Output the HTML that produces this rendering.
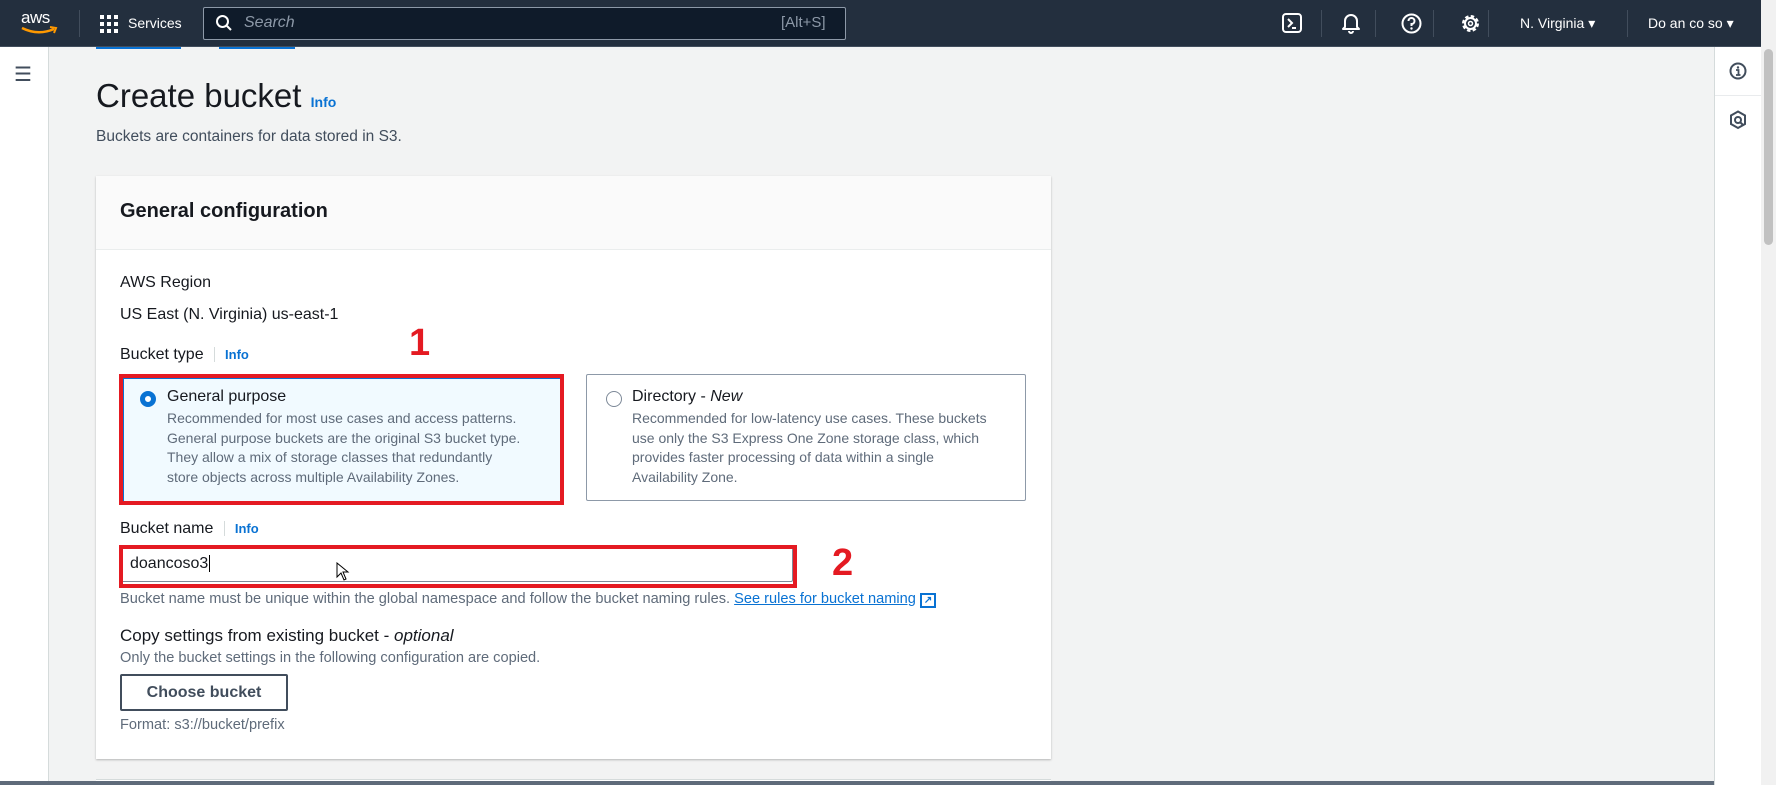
<!DOCTYPE html>
<html><head><meta charset="utf-8"><style>
*{box-sizing:border-box;margin:0;padding:0}
body{width:1776px;height:785px;overflow:hidden;background:#f2f3f3;font-family:"Liberation Sans",sans-serif;color:#16191f;position:relative}
.abs{position:absolute}
.nav{left:0;top:0;width:1761px;height:47px;background:#232f3e;border-bottom:1px solid #414d5c}
.nav .t{color:#fff;font-size:14px;position:absolute;top:15px}
.sep{position:absolute;top:10px;width:1px;height:27px;background:#414d5c}
.side{left:0;top:47px;width:49px;height:738px;background:#fff;border-right:1px solid #d5dbdb}
.rp{left:1714px;top:47px;width:47px;height:738px;background:#fff;border-left:1px solid #d5dbdb}
.sb{left:1761px;top:0;width:15px;height:785px;background:#f1f1f1}
.card{left:96px;top:176px;width:955px;height:583px;background:#fff;box-shadow:0 1px 2px rgba(0,0,0,.25)}
.hd{left:0;top:0;width:955px;height:74px;background:#fafafa;border-bottom:1px solid #eaeded}
.lbl{font-size:16px;position:absolute}
.info{color:#0972d3;font-weight:bold;font-size:13px}
.desc{font-size:14px;color:#5f6b7a;line-height:19.5px;position:absolute;white-space:nowrap}
.red{position:absolute;border:4px solid #e41a22}
.num{position:absolute;color:#e41a22;font-weight:bold;font-size:38px}
</style></head><body>
<div class="abs nav">
 <div class="abs" style="left:21px;top:8px;color:#fff;font-size:17px;letter-spacing:-.5px">aws</div>
 <svg class="abs" style="left:20px;top:26px" width="40" height="10"><path d="M2 2 Q18 10 34 3" stroke="#ff9900" stroke-width="2.5" fill="none"/><path d="M30 1 L36 2 L34 7" stroke="#ff9900" stroke-width="2" fill="none"/></svg>
 <div class="sep" style="left:79px"></div>
 <svg class="abs" style="left:100px;top:15px" width="18" height="18" fill="#fff"><rect x="0" y="0" width="4" height="4"/><rect x="7" y="0" width="4" height="4"/><rect x="14" y="0" width="4" height="4"/><rect x="0" y="7" width="4" height="4"/><rect x="7" y="7" width="4" height="4"/><rect x="14" y="7" width="4" height="4"/><rect x="0" y="14" width="4" height="4"/><rect x="7" y="14" width="4" height="4"/><rect x="14" y="14" width="4" height="4"/></svg>
 <div class="t" style="left:128px">Services</div>
 <div class="abs" style="left:203px;top:7px;width:643px;height:33px;background:#0f1b2a;border:1px solid #8d99a8;border-radius:2px"></div>
 <svg class="abs" style="left:215px;top:14px" width="18" height="18"><circle cx="7.5" cy="7.5" r="5.5" stroke="#fff" stroke-width="2" fill="none"/><path d="M12 12 L16 16" stroke="#fff" stroke-width="2"/></svg>
 <div class="t" style="left:244px;font-style:italic;color:#8d99a8;font-size:16px;top:14px">Search</div>
 <div class="t" style="left:781px;color:#8d99a8;font-size:15px;top:14px">[Alt+S]</div>
 <svg class="abs" style="left:1282px;top:13px" width="20" height="20"><rect x="1" y="1" width="18" height="18" rx="3" stroke="#fff" stroke-width="2" fill="none"/><path d="M6 6 L10 10 L6 14 M10 15 H14" stroke="#fff" stroke-width="2" fill="none"/></svg>
 <div class="sep" style="left:1321px"></div>
 <svg class="abs" style="left:1341px;top:12px" width="20" height="22"><path d="M4 15 V9 A6 6 0 0 1 16 9 V15 L18 17 H2 Z" stroke="#fff" stroke-width="2" fill="none" stroke-linejoin="round"/><path d="M8 19 A2 2 0 0 0 12 19" stroke="#fff" stroke-width="2" fill="none"/></svg>
 <div class="sep" style="left:1375px"></div>
 <svg class="abs" style="left:1401px;top:13px" width="21" height="21"><circle cx="10.5" cy="10.5" r="9" stroke="#fff" stroke-width="2" fill="none"/><path d="M7.5 8 A3 3 0 1 1 10.5 11 V13" stroke="#fff" stroke-width="2" fill="none"/><circle cx="10.5" cy="15.5" r="1.2" fill="#fff"/></svg>
 <div class="sep" style="left:1433px"></div>
 <svg class="abs" style="left:1460px;top:13px" width="21" height="21"><circle cx="10.5" cy="10.5" r="7" stroke="#fff" stroke-width="3" stroke-dasharray="3.3 2.2" fill="none"/><circle cx="10.5" cy="10.5" r="5.5" stroke="#fff" stroke-width="2" fill="none"/><circle cx="10.5" cy="10.5" r="2" stroke="#fff" stroke-width="1.5" fill="none"/></svg>
 <div class="sep" style="left:1488px"></div>
 <div class="t" style="left:1520px">N. Virginia ▾</div>
 <div class="sep" style="left:1627px"></div>
 <div class="t" style="left:1648px">Do an co so ▾</div>
</div>
<div class="abs side"><div class="abs" style="left:14px;top:15px;color:#414d5c;font-size:20px">☰</div></div>
<div class="abs" style="left:96px;top:47px;width:85px;height:2px;background:#0972d3"></div>
<div class="abs" style="left:219px;top:47px;width:76px;height:2px;background:#0972d3"></div>
<div class="abs" style="left:96px;top:77px;font-size:33px;color:#16191f">Create bucket <span class="info" style="font-size:14px">Info</span></div>
<div class="abs" style="left:96px;top:128px;font-size:15.5px;color:#414d5c">Buckets are containers for data stored in S3.</div>
<div class="abs card">
 <div class="abs hd"><div class="abs" style="left:24px;top:24px;font-size:20px;font-weight:bold">General configuration</div></div>
 <div class="lbl" style="left:24px;top:98px">AWS Region</div>
 <div class="lbl" style="left:24px;top:130px">US East (N. Virginia) us-east-1</div>
 <div class="lbl" style="left:24px;top:170px">Bucket type <span style="border-left:1px solid #d5dbdb;margin-left:6px;padding-left:10px" class="info">Info</span></div>
 <div class="abs" style="left:27px;top:202px;width:440px;height:125px;background:#f1faff;border:1px solid #0972d3"></div>
 <div class="abs" style="left:490px;top:198px;width:440px;height:127px;border:1px solid #8d99a8;border-radius:2px"></div>
 <div class="abs" style="left:44px;top:215px;width:16px;height:16px;border-radius:50%;border:5px solid #0972d3;background:#fff"></div>
 <div class="lbl" style="left:71px;top:212px">General purpose</div>
 <div class="desc" style="left:71px;top:233px">Recommended for most use cases and access patterns.<br>General purpose buckets are the original S3 bucket type.<br>They allow a mix of storage classes that redundantly<br>store objects across multiple Availability Zones.</div>
 <div class="abs" style="left:510px;top:215px;width:16px;height:16px;border-radius:50%;border:1.5px solid #7d8998"></div>
 <div class="lbl" style="left:536px;top:212px">Directory - <i>New</i></div>
 <div class="desc" style="left:536px;top:233px">Recommended for low-latency use cases. These buckets<br>use only the S3 Express One Zone storage class, which<br>provides faster processing of data within a single<br>Availability Zone.</div>
 <div class="lbl" style="left:24px;top:344px">Bucket name <span style="border-left:1px solid #d5dbdb;margin-left:6px;padding-left:10px" class="info">Info</span></div>
 <div class="abs" style="left:24px;top:371px;width:673px;height:35px;border:1px solid #7d8998;border-radius:2px"></div>
 <div class="lbl" style="left:34px;top:379px">doancoso3<span style="border-left:1px solid #000;margin-left:1px"></span></div>
 <svg class="abs" style="left:240px;top:386px" width="14" height="20"><path d="M1 1 V15 L5 11 L8 18 L10 17 L7 10 L12 10 Z" fill="#fff" stroke="#000" stroke-width="1"/></svg>
 <div class="desc" style="left:24px;top:414px;font-size:14.6px">Bucket name must be unique within the global namespace and follow the bucket naming rules. <span style="color:#0972d3;text-decoration:underline">See rules for bucket naming</span> <span style="color:#0972d3;font-weight:bold;border:2px solid #0972d3;font-size:10px;padding:0 2px">↗</span></div>
 <div class="lbl" style="left:24px;top:450px;font-size:17px">Copy settings from existing bucket - <i>optional</i></div>
 <div class="desc" style="left:24px;top:473px;font-size:14.6px">Only the bucket settings in the following configuration are copied.</div>
 <div class="abs" style="left:24px;top:498px;width:168px;height:37px;border:2px solid #414d5c;border-radius:2px;font-weight:bold;font-size:16px;text-align:center;line-height:33px;color:#414d5c">Choose bucket</div>
 <div class="desc" style="left:24px;top:540px;font-size:14.6px">Format: s3://bucket/prefix</div>
</div>
<div class="red" style="left:119px;top:374px;width:445px;height:131px"></div>
<div class="red" style="left:119px;top:545px;width:678px;height:43px"></div>
<div class="num" style="left:409px;top:322px">1</div>
<div class="num" style="left:832px;top:542px">2</div>
<div class="abs" style="left:96px;top:779px;width:955px;height:6px;background:#fff;border-top:1px solid #d5dbdb"></div>
<div class="abs" style="left:0;top:781px;width:1761px;height:4px;background:#5f6b7a"></div>
<div class="abs rp">
 <svg class="abs" style="left:14px;top:15px" width="18" height="18"><circle cx="9" cy="9" r="7.5" stroke="#414d5c" stroke-width="2" fill="none"/><circle cx="9" cy="5.5" r="1.2" fill="#414d5c"/><path d="M7 8 H9.5 V13 M7 13 H11.5" stroke="#414d5c" stroke-width="1.8" fill="none"/></svg>
 <div class="abs" style="left:0;top:48px;width:47px;height:1px;background:#e9ebed"></div>
 <svg class="abs" style="left:14px;top:63px" width="18" height="20"><path d="M9 1.5 L16 5.5 V14 L9 18 L2 14 V5.5 Z" stroke="#414d5c" stroke-width="2" fill="none"/><circle cx="9" cy="10" r="3" stroke="#414d5c" stroke-width="2" fill="none"/><path d="M11 12 L14 15" stroke="#414d5c" stroke-width="2"/></svg>
</div>
<div class="abs sb"><div class="abs" style="left:3px;top:49px;width:9px;height:196px;background:#c1c1c1;border-radius:5px"></div></div>
</body></html>
